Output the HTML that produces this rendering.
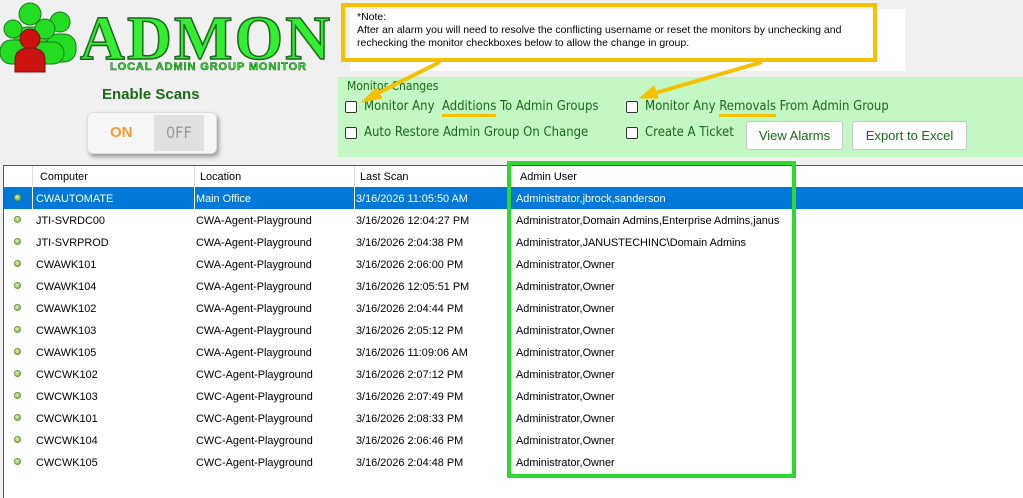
<!DOCTYPE html>
<html><head><meta charset="utf-8"><style>
*{margin:0;padding:0;box-sizing:border-box}
body{width:1023px;height:498px;background:#f0f0f0;position:relative;overflow:hidden;font-family:"Liberation Sans",sans-serif}
.abs{position:absolute}
.t{font-family:"Liberation Sans",sans-serif;font-size:10.9px;color:#000}
.row{position:absolute;left:4px;right:0;height:22px}
.row div{position:absolute;top:6px;white-space:nowrap}
.dot{width:7px;height:7px;border-radius:50%;background:radial-gradient(circle at 35% 35%,#d8f0b0,#7fb040);border:1px solid #6a9a40;left:10px;top:7px!important}
.lbl{font-size:13px;color:#1a6a1a;position:absolute;white-space:nowrap;font-family:"DejaVu Sans Condensed","Liberation Sans",sans-serif}
.u{border-bottom:3px solid #f5c000;padding-bottom:0}
.cb{position:absolute;width:12px;height:12px;border:1px solid #333;background:#fff;border-radius:2px}
.btn{position:absolute;background:#fdfdfd;border:1px solid #c8c8c8;border-radius:3px;font-size:13px;color:#1a6a1a;text-align:center;white-space:nowrap;font-family:"Liberation Sans",sans-serif}
</style></head><body>
<svg class="abs" style="left:0;top:0" width="340" height="80">
<g fill="#22dd22" stroke="#1a7a1a" stroke-width="1">
<circle cx="60" cy="22" r="10"/><rect x="46" y="34" width="30" height="28" rx="12"/>
<circle cx="30" cy="14" r="11"/><rect x="14" y="27" width="32" height="28" rx="13"/>
<circle cx="13" cy="29" r="9"/><rect x="0" y="40" width="28" height="24" rx="11"/>
<circle cx="45" cy="29" r="10"/><rect x="30" y="42" width="34" height="22" rx="11"/>
</g>
<g fill="#cc1111" stroke="#7a1010"><circle cx="30" cy="39" r="10"/><path d="M15 72 v-12 q0 -12 15 -12 q15 0 15 12 v12z"/></g>
<text x="80" y="59" font-family="Liberation Serif,serif" font-size="62" font-weight="bold" fill="#33ee33" stroke="#1a6a1a" stroke-width="1.5" textLength="250">ADMON</text>
<text x="110" y="70" font-family="Liberation Sans,sans-serif" font-size="11" font-weight="bold" fill="#33dd33" stroke="#1a6a1a" stroke-width=".5" textLength="196">LOCAL ADMIN GROUP MONITOR</text>
</svg>
<div class="abs" style="left:102px;top:86px;font-size:15px;font-weight:bold;color:#1a6a1a">Enable Scans</div>
<div class="abs" style="left:87px;top:112px;width:130px;height:42px;border-radius:6px;background:#f6f6f6;box-shadow:2px 3px 4px #999;border:1px solid #ddd">
<div class="abs" style="left:66px;top:2px;width:50px;height:36px;background:#e0e0e0"></div>
<div class="abs" style="left:22px;top:11px;font-size:15px;font-weight:bold;color:#f39c30">ON</div>
<div class="abs" style="left:78px;top:10px;font-size:16px;color:#999;font-family:'DejaVu Sans Condensed',sans-serif">0FF</div>
</div>
<div class="abs" style="left:350px;top:9px;width:555px;height:62px;background:#fff"></div>
<div class="abs" style="left:341px;top:3px;width:536px;height:59px;border:4px solid #f5c000"></div>
<div class="abs t" style="left:357px;top:11px;line-height:13px;font-size:10.5px">*Note:<br>After an alarm you will need to resolve the conflicting username or reset the monitors by unchecking and<br>rechecking the monitor checkboxes below to allow the change in group.</div>
<div class="abs" style="left:338px;top:77px;width:685px;height:80px;background:#c3f7c3;border-top:1px solid #ddd"></div>
<div class="lbl" style="left:347px;top:79px;font-size:12px">Monitor Changes</div>
<div class="cb" style="left:345px;top:101px"></div><div class="lbl" style="left:364px;top:99px">Monitor Any &nbsp;<span class="u">Additions</span> To Admin Groups</div>
<div class="cb" style="left:626px;top:101px"></div><div class="lbl" style="left:645px;top:99px">Monitor Any <span class="u">Removals</span> From Admin Group</div>
<div class="cb" style="left:345px;top:127px"></div><div class="lbl" style="left:364px;top:125px">Auto Restore Admin Group On Change</div>
<div class="cb" style="left:626px;top:127px"></div><div class="lbl" style="left:645px;top:125px">Create A Ticket</div>
<div class="btn" style="left:746px;top:121px;width:97px;height:29px;line-height:27px">View Alarms</div>
<div class="btn" style="left:852px;top:121px;width:115px;height:29px;line-height:27px">Export to Excel</div>
<svg class="abs" style="left:0;top:0" width="1023" height="160">
<g stroke="#f5c000" stroke-width="4" fill="#f5c000">
<line x1="440" y1="62" x2="372" y2="96"/><polygon points="362,102 376,88 382,98" stroke-width="1"/>
<line x1="762" y1="62" x2="652" y2="94"/><polygon points="640,98 654,86 658,98" stroke-width="1"/>
</g></svg>
<div class="abs" style="left:3px;top:165px;width:1020px;height:333px;background:#fff;border-left:1px solid #555;border-top:1px solid #555"></div>
<div class="abs t" style="left:4px;top:166px;right:0;height:20px;background:#fff">
<div class="abs" style="left:28px;top:0;width:1px;height:20px;background:#ddd"></div>
<div class="abs" style="left:190px;top:0;width:1px;height:20px;background:#ddd"></div>
<div class="abs" style="left:350px;top:0;width:1px;height:20px;background:#ddd"></div>
<div class="abs" style="left:503px;top:0;width:1px;height:20px;background:#ddd"></div>
<div class="abs" style="left:36px;top:5px">Computer</div><div class="abs" style="left:196px;top:5px">Location</div><div class="abs" style="left:356px;top:5px">Last Scan</div><div class="abs" style="left:516px;top:5px">Admin User</div>
</div>
<div class="abs" style="left:4px;top:187px;right:0;height:22px;background:#0078d7"></div>
<div class="abs" style="left:32px;top:187px;width:1px;height:22px;background:#fff"></div>
<div class="abs" style="left:194px;top:187px;width:1px;height:22px;background:#fff"></div>
<div class="abs" style="left:354px;top:187px;width:1px;height:22px;background:#fff"></div>
<div id="rows" class="t"></div>
<div class="abs" style="left:507px;top:161px;width:289px;height:317px;border:4px solid #2ed82e"></div>
<script>
var d=[["CWAUTOMATE","Main Office","3/16/2026 11:05:50 AM","Administrator,jbrock,sanderson"],
["JTI-SVRDC00","CWA-Agent-Playground","3/16/2026 12:04:27 PM","Administrator,Domain Admins,Enterprise Admins,janus"],
["JTI-SVRPROD","CWA-Agent-Playground","3/16/2026 2:04:38 PM","Administrator,JANUSTECHINC\\Domain Admins"],
["CWAWK101","CWA-Agent-Playground","3/16/2026 2:06:00 PM","Administrator,Owner"],
["CWAWK104","CWA-Agent-Playground","3/16/2026 12:05:51 PM","Administrator,Owner"],
["CWAWK102","CWA-Agent-Playground","3/16/2026 2:04:44 PM","Administrator,Owner"],
["CWAWK103","CWA-Agent-Playground","3/16/2026 2:05:12 PM","Administrator,Owner"],
["CWAWK105","CWA-Agent-Playground","3/16/2026 11:09:06 AM","Administrator,Owner"],
["CWCWK102","CWC-Agent-Playground","3/16/2026 2:07:12 PM","Administrator,Owner"],
["CWCWK103","CWC-Agent-Playground","3/16/2026 2:07:49 PM","Administrator,Owner"],
["CWCWK101","CWC-Agent-Playground","3/16/2026 2:08:33 PM","Administrator,Owner"],
["CWCWK104","CWC-Agent-Playground","3/16/2026 2:06:46 PM","Administrator,Owner"],
["CWCWK105","CWC-Agent-Playground","3/16/2026 2:04:48 PM","Administrator,Owner"]];
var h="";d.forEach(function(r,i){var c=i==0?"color:#fff;":"";
h+='<div class="row" style="top:'+(187+22*i)+'px;'+c+'"><div class="dot"></div><div style="left:32px">'+r[0]+'</div><div style="left:192px">'+r[1]+'</div><div style="left:352px">'+r[2]+'</div><div style="left:512px">'+r[3]+'</div></div>';});
document.getElementById("rows").innerHTML=h;
</script>
</body></html>
